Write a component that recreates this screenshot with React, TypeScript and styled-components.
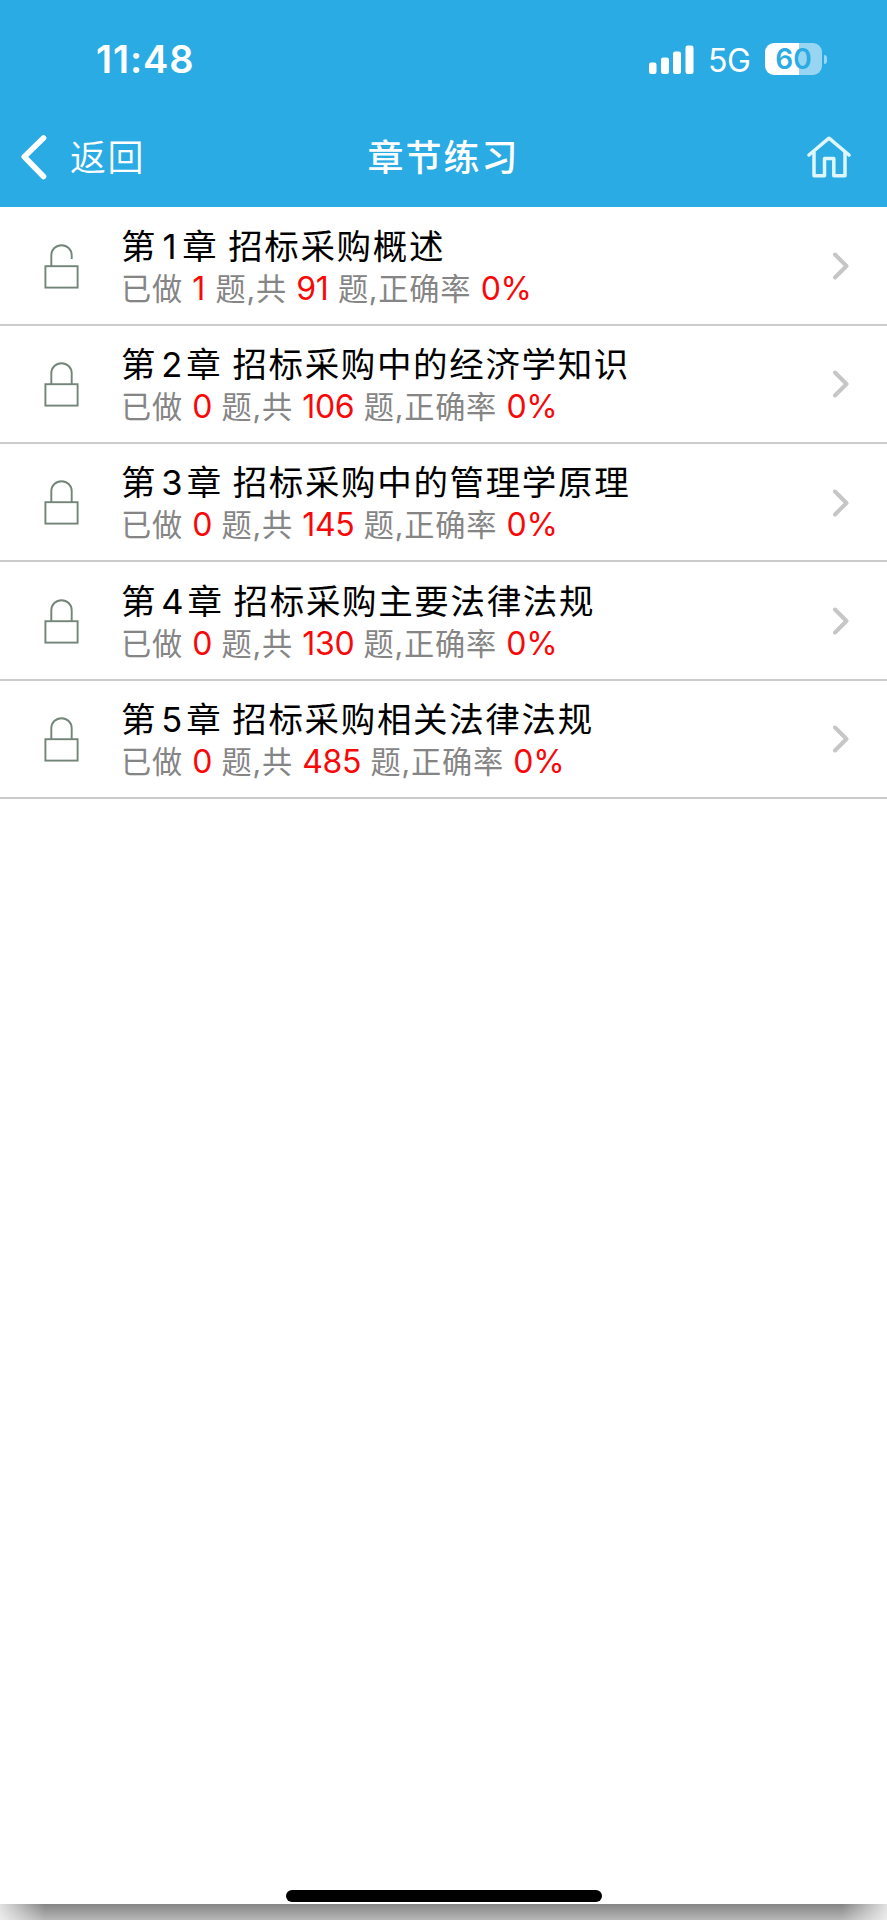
import React from 'react';
import styled, { createGlobalStyle } from 'styled-components';

const BLUE = '#2aabe4';

const GlobalStyle = createGlobalStyle`
  * { box-sizing: border-box; }
  html, body { margin: 0; padding: 0; background: #fff; }
  body { font-family: Inter, "Noto Sans CJK SC", sans-serif; }
`;

const Screen = styled.div`
  width: 887px;
  height: 1920px;
  display: flex;
  flex-direction: column;
  overflow: hidden;
  background: #fff;
`;

const Header = styled.header`
  flex: none;
  height: 207px;
  background: ${BLUE};
  color: #fff;
`;

const StatusBar = styled.div`
  height: 118px;
  padding: 0 60px 0 96px;
  display: flex;
  align-items: center;
  justify-content: space-between;
`;

const Time = styled.span`
  font-size: 38px;
  font-weight: 600;
  line-height: 44px;
  letter-spacing: 0.9px;
`;

const Indicators = styled.div`
  display: flex;
  align-items: center;
`;

const Network = styled.span`
  margin: 3px 15px 0 14px;
  width: 42px;
  font-size: 32px;
  line-height: 36px;
  letter-spacing: -0.5px;
`;

const Battery = styled.div`
  display: flex;
  align-items: center;
  gap: 2px;
`;

const BatteryBody = styled.div<{ $level: number }>`
  width: 57px;
  height: 32px;
  border-radius: 9px;
  background: linear-gradient(to right, #fff ${p => p.$level}%, #97d5f2 ${p => p.$level}%);
  color: ${BLUE};
  font-size: 28px;
  font-weight: 600;
  line-height: 32px;
  text-align: center;
`;

const BatteryTip = styled.div`
  width: 3px;
  height: 9px;
  border-radius: 0 4px 4px 0;
  background: #97d5f2;
`;

const NavBar = styled.nav`
  height: 78px;
  padding: 0 36px 0 20px;
  display: grid;
  grid-template-columns: 1fr auto 1fr;
  align-items: center;
`;

const Back = styled.a`
  display: flex;
  align-items: center;
  gap: 20px;
  font-size: 36px;
  font-weight: 350;
  line-height: 52px;
  letter-spacing: 1.4px;
`;

const BackLabel = styled.span`
  padding-top: 2px;
`;

const PageTitle = styled.h1`
  margin: 0;
  padding: 2px 0 0 16px;
  font-size: 36px;
  font-weight: 500;
  line-height: 52px;
  letter-spacing: 2px;
`;

const HomeLink = styled.a`
  justify-self: end;
  display: flex;
`;

const List = styled.ul`
  flex: 1;
  margin: 0;
  padding: 0.5px 0 0;
  list-style: none;
`;

const Row = styled.li`
  height: 118.3px;
  padding: 1px 38px 0 44px;
  display: flex;
  align-items: center;
  border-bottom: 2px solid #cbcbcb;
`;

const RowText = styled.div`
  flex: 1;
  margin-left: 42px;
  padding-top: 3px;
`;

const ChapterTitle = styled.div`
  font-size: 34.5px;
  line-height: 43px;
  letter-spacing: 1.65px;
  word-spacing: -1.5px;
  color: #000;
  white-space: pre;
`;

const ChapterNumber = styled.span`
  display: inline-block;
  min-width: 18.5px;
  margin: 0 2.5px 0 4px;
  text-align: center;
`;

const Stats = styled.div`
  font-size: 30.2px;
  line-height: 43px;
  letter-spacing: 0.8px;
  color: #858585;
  white-space: pre;
`;

const Value = styled.span`
  display: inline-block;
  min-width: 14px;
  font-size: 32px;
  line-height: 1;
  letter-spacing: -0.3px;
  color: #f80808;
`;

const Footer = styled.footer`
  flex: none;
  height: 30px;
  display: flex;
  flex-direction: column;
  align-items: center;
  justify-content: space-between;
`;

const HomeIndicator = styled.div`
  width: 316px;
  height: 12px;
  border-radius: 6px;
  background: #000;
`;

const BottomShade = styled.div`
  width: 100%;
  height: 16px;
  background:
    linear-gradient(to right, rgba(255,255,255,.75), rgba(255,255,255,0) 45px, rgba(255,255,255,0) 842px, rgba(255,255,255,.75)),
    linear-gradient(#858585, #b7b7b7);
`;

const Signal = () => (
  <svg width="45" height="29" viewBox="0 0 45 29" fill="#fff">
    <rect x="0" y="17.5" width="7.5" height="11.5" rx="2.2" />
    <rect x="12" y="12.5" width="8" height="16.5" rx="2.2" />
    <rect x="24" y="6.5" width="8" height="22.5" rx="2.2" />
    <rect x="36.5" y="0.5" width="8" height="28.5" rx="2.2" />
  </svg>
);

const BackIcon = () => (
  <svg width="30" height="46" viewBox="0 0 30 46" fill="none" stroke="#fff" strokeWidth="5.6" strokeLinecap="round" strokeLinejoin="round">
    <path d="M23.5 4 4.3 22.8 23.5 42.5" />
  </svg>
);

const HomeIcon = () => (
  <svg width="44" height="42" viewBox="0 0 44 42" fill="none" stroke="#dff6fd" strokeWidth="3.5" strokeLinejoin="round">
    <path d="M2 19 22 2.2 42 19" strokeLinecap="round" />
    <path d="M7 16V39.8H17.5V22.5H26.8V39.8H38V16" />
  </svg>
);

const LockIcon = ({ open }: { open?: boolean }) => (
  <svg width="35" height="45" viewBox="0 0 35 45" fill="none" stroke="#738578" strokeWidth="1.9">
    <rect x="1.4" y="22.2" width="32.2" height="21.4" />
    <path d={open ? 'M7.3 22V11.3C7.3 5.4 12 1.2 17.5 1.2S27.7 5.4 27.7 11.3V15' : 'M7.3 22V11.3C7.3 5.4 12 1.2 17.5 1.2S27.7 5.4 27.7 11.3V22'} />
  </svg>
);

const Chevron = () => (
  <svg width="18" height="30" viewBox="0 0 18 30" fill="none" stroke="#c6c6c6" strokeWidth="4" strokeLinecap="round" strokeLinejoin="round">
    <path d="M4 3.5 15.5 15 4 26.5" />
  </svg>
);

const chapters = [
  { name: '招标采购概述', done: 1, total: 91, open: true },
  { name: '招标采购中的经济学知识', done: 0, total: 106 },
  { name: '招标采购中的管理学原理', done: 0, total: 145 },
  { name: '招标采购主要法律法规', done: 0, total: 130 },
  { name: '招标采购相关法律法规', done: 0, total: 485 },
];

export default function App() {
  return (
    <Screen lang="zh-CN">
      <GlobalStyle />
      <Header>
        <StatusBar>
          <Time>11:48</Time>
          <Indicators>
            <Signal />
            <Network>5G</Network>
            <Battery>
              <BatteryBody $level={60}>60</BatteryBody>
              <BatteryTip />
            </Battery>
          </Indicators>
        </StatusBar>
        <NavBar>
          <Back><BackIcon /><BackLabel>返回</BackLabel></Back>
          <PageTitle>章节练习</PageTitle>
          <HomeLink><HomeIcon /></HomeLink>
        </NavBar>
      </Header>
      <List>
        {chapters.map((c, i) => (
          <Row key={c.name}>
            <LockIcon open={c.open} />
            <RowText>
              <ChapterTitle>第<ChapterNumber>{i + 1}</ChapterNumber>章 {c.name}</ChapterTitle>
              <Stats>
                已做 <Value>{c.done}</Value> 题,共 <Value>{c.total}</Value> 题,正确率 <Value>0%</Value>
              </Stats>
            </RowText>
            <Chevron />
          </Row>
        ))}
      </List>
      <Footer>
        <HomeIndicator />
        <BottomShade />
      </Footer>
    </Screen>
  );
}
